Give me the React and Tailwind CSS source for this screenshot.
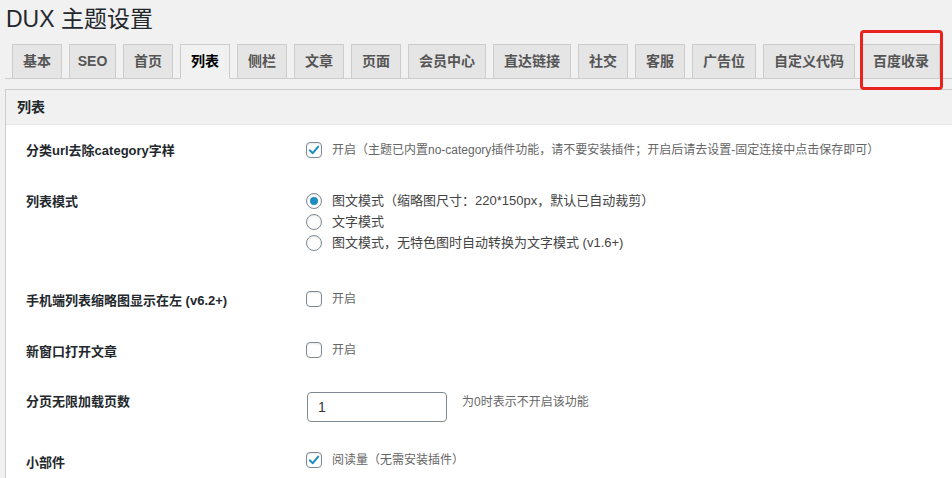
import React from 'react'

const TABS = [
  { label: '基本' },
  { label: 'SEO', w: 'w-[47px]' },
  { label: '首页' },
  { label: '列表', active: true },
  { label: '侧栏' },
  { label: '文章' },
  { label: '页面' },
  { label: '会员中心' },
  { label: '直达链接' },
  { label: '社交' },
  { label: '客服' },
  { label: '广告位' },
  { label: '自定义代码' },
  { label: '百度收录' },
]

function Checkbox({ checked }) {
  return (
    <span className="w-4 h-4 shrink-0 rounded-[4px] border border-[#7e8993] bg-white shadow-[inset_0_1px_2px_rgba(0,0,0,0.1)] flex items-center justify-center">
      {checked && (
        <svg width="14" height="14" viewBox="0 0 16 16">
          <path d="M3.2 8.4 L6.6 11.6 L12.8 4.2" fill="none" stroke="#1e8cbe" strokeWidth="2.3" strokeLinecap="round" strokeLinejoin="round" />
        </svg>
      )}
    </span>
  )
}

function Radio({ checked, label }) {
  return (
    <div className="h-[21px] flex items-center gap-[10px]">
      <span className="w-4 h-4 shrink-0 rounded-full border border-[#7e8993] bg-white shadow-[inset_0_1px_2px_rgba(0,0,0,0.1)] flex items-center justify-center">
        {checked && <span className="w-2 h-2 rounded-full bg-[#1e8cbe]" />}
      </span>
      <span className="text-[13px] text-[#444]">{label}</span>
    </div>
  )
}

function CheckRow({ checked, label }) {
  return (
    <div className="h-4 flex items-center gap-[10px]">
      <Checkbox checked={checked} />
      <span className="text-[12px] leading-5 text-[#666]">{label}</span>
    </div>
  )
}

function Row({ label, h, labelPt = 'pt-[17px]', ctrlPt = 'pt-[17px]', children }) {
  return (
    <div className={`flex ${h}`}>
      <div className={`w-[280px] shrink-0 ${labelPt} text-[13px] leading-5 font-bold text-[#23282d]`}>{label}</div>
      <div className={ctrlPt}>{children}</div>
    </div>
  )
}

export default function App() {
  return (
    <div className="w-[952px] h-[478px] overflow-hidden relative bg-[#f1f1f1] font-['Liberation_Sans','Noto_Sans_CJK_SC',sans-serif]">
      <h1 className="pl-[6px] pt-[5px] h-[44px] text-[23px] leading-[29px] font-normal text-[#23282d]">DUX 主题设置</h1>

      {/* tabs */}
      <div className="ml-[5px] pl-[7px] flex gap-[7px] border-b border-[#ccc]">
        {TABS.map((t) => (
          <div
            key={t.label}
            className={`h-[35px] ${t.w || 'px-[10px]'} -mb-px flex items-center justify-center border border-[#ccc] text-[14px] font-bold whitespace-nowrap ${
              t.active ? 'bg-[#f1f1f1] border-b-[#f1f1f1] text-black' : 'bg-[#e5e5e5] border-b-[#ccc] text-[#555]'
            }`}
          >
            {t.label}
          </div>
        ))}
      </div>

      {/* panel */}
      <div className="mt-[10px] ml-[5px] border-l border-t border-[#ccc]">
        <div className="h-[35px] pl-[11px] flex items-center border-b border-[#e5e5e5] text-[14px] font-bold text-[#23282d]">列表</div>
        <div className="bg-white pl-[20px] h-[400px]">
          <Row label="分类url去除category字样" h="h-[51px]" labelPt="pt-[16px]">
            <CheckRow checked label="开启（主题已内置no-category插件功能，请不要安装插件；开启后请去设置-固定连接中点击保存即可）" />
          </Row>
          <Row label="列表模式" h="h-[98px]" labelPt="pt-[16px]" ctrlPt="pt-[14px]">
            <Radio checked label="图文模式（缩略图尺寸：220*150px，默认已自动裁剪）" />
            <Radio label="文字模式" />
            <Radio label="图文模式，无特色图时自动转换为文字模式 (v1.6+)" />
          </Row>
          <Row label="手机端列表缩略图显示在左 (v6.2+)" h="h-[51px]">
            <CheckRow label="开启" />
          </Row>
          <Row label="新窗口打开文章" h="h-[50px]">
            <CheckRow label="开启" />
          </Row>
          <Row label="分页无限加载页数" h="h-[60px]">
            <div className="flex items-start gap-[15px] ml-[1px]">
              <div className="w-[140px] h-[30px] border border-[#7e8993] rounded-[4px] bg-white pl-[10px] flex items-center text-[14px] text-[#32373c]">1</div>
              <span className="text-[12px] leading-5 text-[#666]">为0时表示不开启该功能</span>
            </div>
          </Row>
          <Row label="小部件" h="h-[60px]" labelPt="pt-[18px]">
            <CheckRow checked label="阅读量（无需安装插件）" />
          </Row>
        </div>
      </div>

      {/* annotation */}
      <div className="absolute left-[860px] top-[30px] w-[83px] h-[60px] border-[3px] border-[#e8231e] rounded-[4px]" />
    </div>
  )
}
